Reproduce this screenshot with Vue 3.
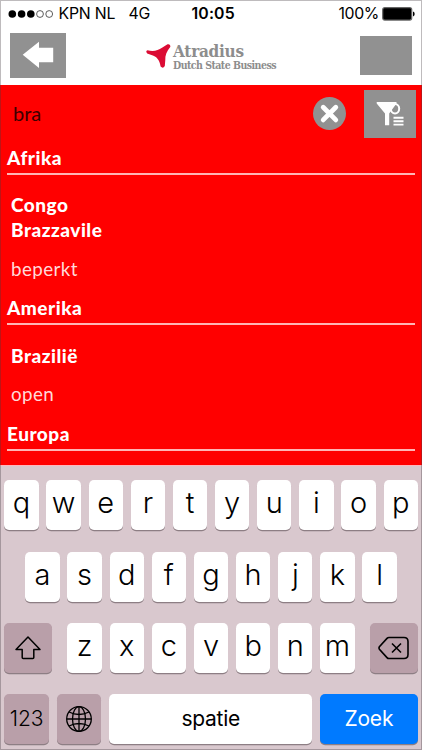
<script setup>
const groups = [
  { region: 'Afrika', country: ['Congo', 'Brazzavile'], status: 'beperkt' },
  { region: 'Amerika', country: ['Brazilië'], status: 'open' },
  { region: 'Europa', country: [], status: '' }
]
const row1 = [...'qwertyuiop']
const row2 = [...'asdfghjkl']
const row3 = [...'zxcvbnm']
</script>

<template>
  <div class="phone">
    <div class="status">
      <svg class="signal" width="46" height="10" viewBox="0 0 46 10">
        <circle cx="4.3" cy="5" r="3.8" /><circle cx="13.6" cy="5" r="3.8" /><circle cx="22.8" cy="5" r="3.8" />
        <circle class="ring" cx="32" cy="5" r="3.4" /><circle class="ring" cx="41.2" cy="5" r="3.4" />
      </svg>
      <span class="carrier">KPN NL</span>
      <span class="net">4G</span>
      <span class="time">10:05</span>
      <span class="pct">100%</span>
      <svg class="battery" width="33" height="14" viewBox="0 0 33 14">
        <rect x="0.7" y="0.7" width="29" height="12.4" rx="2" fill="#000" stroke="#666" stroke-width="1.2" />
        <path d="M31 4.6q1.7.5 1.7 2.4t-1.7 2.4z" fill="#000" />
      </svg>
    </div>

    <header class="header">
      <button class="back" aria-label="Terug">
        <svg width="56" height="45" viewBox="0 0 56 45"><path d="M12.700 21.700 29 8.800V14.800H43.200V29.200H29V35Z" fill="#fff" /></svg>
      </button>
      <div class="logo">
        <svg width="28" height="40" viewBox="0 0 28 40">
          <path d="M2.500 12.300C8 13.700 13 12.800 17 9.800L22.500 6.300Q25.600 5.500 25.400 8.800C21.500 13.500 20 17.500 20.300 22L19.800 28Q18 31 15.600 28.500C14.800 23 12.500 19.500 8.500 17.800L2.200 15.500Q.2 13 2.500 12.300Z" fill="#db0c34" />
        </svg>
        <div class="names">
          <span class="brand">Atradius</span>
          <span class="sub">Dutch State Business</span>
        </div>
      </div>
      <div class="box"></div>
    </header>

    <main class="results">
      <div class="search">
        <span class="query">bra</span>
        <svg class="clear" width="33" height="33" viewBox="0 0 33 33">
          <circle cx="16.500" cy="16.500" r="16.500" fill="#919191" />
          <path d="M10.200 10.300 22.800 22.900M22.800 10.300 10.200 22.900" stroke="#fff" stroke-width="4.800" stroke-linecap="round" />
        </svg>
        <button class="filter" aria-label="Filter">
          <svg width="52" height="48" viewBox="0 0 52 48">
            <ellipse cx="31" cy="18.700" rx="4.200" ry="4.700" fill="none" stroke="#fff" stroke-width="2" />
            <path d="M12.700 12H32.500V13.500L25.200 23.500V35.300H21V23.500L12.700 13.500Z" fill="#fff" />
            <path d="M29.500 27.800H39.500M29.500 31.200H39.500M29.500 34.600H39.500" stroke="#fff" stroke-width="1.900" />
          </svg>
        </button>
      </div>
      <section v-for="g in groups" :key="g.region" class="group">
        <h2 class="region">{{ g.region }}</h2>
        <template v-if="g.country.length">
          <h3 class="country"><span v-for="c in g.country" :key="c">{{ c }}</span></h3>
          <p class="cover">{{ g.status }}</p>
        </template>
      </section>
    </main>

    <div class="keyboard">
      <div class="row"><span v-for="k in row1" :key="k" class="key">{{ k }}</span></div>
      <div class="row middle"><span v-for="k in row2" :key="k" class="key">{{ k }}</span></div>
      <div class="row spread">
        <span class="key dark wide">
          <svg width="28" height="26" viewBox="0 0 28 26"><path d="M14 2 26 14.500H19.800V22.500Q19.800 23.500 18.800 23.500H9.200Q8.200 23.500 8.200 22.500V14.500H2Z" fill="none" stroke="#000" stroke-width="1.500" stroke-linejoin="round" /></svg>
        </span>
        <div class="letters"><span v-for="k in row3" :key="k" class="key">{{ k }}</span></div>
        <span class="key dark wide">
          <svg width="32" height="24" viewBox="0 0 32 24"><path d="M11 1.500H26Q30 1.500 30 5.500V18.500Q30 22.500 26 22.500H11Q9.800 22.500 9 21.600L1.400 13.200Q.6 12 1.400 10.800L9 2.400Q9.800 1.500 11 1.500Z" fill="none" stroke="#000" stroke-width="1.600" /><path d="M14 7.500 23 16.500M23 7.500 14 16.500" stroke="#000" stroke-width="1.600" /></svg>
        </span>
      </div>
      <div class="row bottom">
        <span class="key dark num">123</span>
        <span class="key dark globe">
          <svg width="28" height="28" viewBox="0 0 28 28" fill="none" stroke="#000" stroke-width="1.300">
            <circle cx="14" cy="14" r="12.300" /><ellipse cx="14" cy="14" rx="6.500" ry="12.300" />
            <path d="M14 1.700V26.300M1.700 14H26.300M4 7Q14 12 24 7M4 21Q14 16 24 21" />
          </svg>
        </span>
        <span class="key space">spatie</span>
        <span class="key go">Zoek</span>
      </div>
    </div>
  </div>
</template>

<style>
body { margin: 0; }
</style>

<style scoped>
.phone { position: relative; box-sizing: border-box; width: 422px; height: 750px; overflow: hidden; background: #fff; font-family: Inter, sans-serif; color: #000; display: flex; flex-direction: column; }
.phone::after { content: ""; position: absolute; inset: 0; border: 1px solid rgba(70, 60, 65, .35); pointer-events: none; }
.status { height: 28px; flex: none; display: grid; grid-template-columns: 58.500px 70px 63px 147px 43.500px 1fr; align-items: center; font-size: 15.800px; line-height: 28px; white-space: nowrap; }
.signal { margin-left: 8px; }
.ring { fill: none; stroke: #333; stroke-width: .8; }
.carrier { letter-spacing: -.2px; }
.net { letter-spacing: -.3px; }
.time { font-weight: 600; letter-spacing: .15px; }
.pct { letter-spacing: -.35px; }
.header { height: 57px; flex: none; display: flex; align-items: flex-start; box-sizing: border-box; padding: 5px 10px 0; }
button { padding: 0; border: 0; background: #919191; display: block; }
button svg { display: block; }
.back { width: 56px; height: 45px; }
.logo { margin: 5px 0 0 79px; width: 140px; display: flex; }
.names { display: flex; flex-direction: column; align-items: flex-start; padding-top: 4px; color: #8d8d8d; white-space: nowrap; font-family: "DejaVu Serif Condensed", "DejaVu Serif", serif; font-weight: bold; }
.brand { font-size: 17px; line-height: 18px; letter-spacing: -.25px; }
.sub { font-size: 10.500px; line-height: 11px; letter-spacing: -.53px; }
.box { margin: 3px 0 0 75px; width: 52px; height: 39px; background: #919191; }
.results { height: 379.500px; flex: none; background: #f00; color: #fff; overflow: hidden; font-family: Lato, sans-serif; }
.search { height: 60px; display: flex; align-items: flex-start; padding: 0 6px 0 13px; }
.query { flex: 1; padding-top: 16px; font-size: 20px; line-height: 24px; color: #3c0000; }
.clear { margin: 12px 18px 0 0; }
.filter { margin-top: 5px; width: 52px; height: 48px; }
.region { margin: 0 7px; height: 28px; border-bottom: 2px solid #ffb5b5; font-size: 19px; line-height: 26px; font-weight: 900; letter-spacing: .5px; }
.country { margin: 17.300px 11px 0; font-size: 19px; line-height: 25px; font-weight: 900; letter-spacing: .5px; }
.country span { display: block; }
.cover { margin: 11.700px 11px 14.300px; padding-top: 2px; font-size: 18.800px; line-height: 25px; letter-spacing: .4px; font-weight: 400; color: #ffdada; }
.keyboard { height: 285.500px; flex: none; box-sizing: border-box; padding: 14.900px 4.300px 0; background: #d9c8ce; border-top: 1px solid #ffb7bd; display: flex; flex-direction: column; gap: 21.300px; }
.row, .letters { display: flex; gap: 7.850px; height: 50px; }
.row.bottom { gap: 8.100px; }
.middle { justify-content: center; }
.spread { justify-content: space-between; gap: 0; }
.key { box-sizing: border-box; width: 34.300px; height: 50px; flex: none; border-radius: 5px; background: #fff; box-shadow: 0 1.200px 0 #8d7e84; display: flex; align-items: center; justify-content: center; padding-bottom: 4px; font-size: 29px; font-weight: 300; line-height: 46px; }
.dark { background: #b99fa9; padding: 0; }
.wide { width: 47.300px; }
.num { width: 44.500px; font-size: 21px; font-weight: 300; letter-spacing: -.1px; }
.globe { width: 44.500px; }
.space { width: 202.500px; font-size: 21px; font-weight: 400; padding: 0; letter-spacing: -.3px; }
.go { width: 97.500px; background: #007aff; color: #fff; font-size: 21px; font-weight: 400; padding: 0; letter-spacing: -.2px; }
</style>
